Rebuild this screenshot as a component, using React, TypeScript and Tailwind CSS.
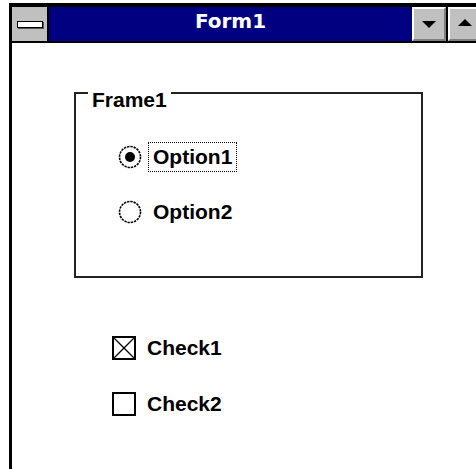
import React from 'react';

const uiFont = { fontFamily: '"Liberation Sans", Arial, sans-serif' };

function RadioDot({ checked }: { checked?: boolean }) {
  return (
    <svg width="24" height="24" viewBox="0 0 24 24" className="shrink-0">
      <circle cx="12" cy="12" r="10.5" fill="white" stroke="#000" strokeWidth="1.6" strokeDasharray="2.4 0.9" />
      {checked && <circle cx="12" cy="12" r="5" fill="#000" />}
    </svg>
  );
}

function CheckBox({ checked }: { checked?: boolean }) {
  return (
    <svg width="24" height="24" viewBox="0 0 24 24" className="shrink-0">
      <rect x="1" y="1" width="22" height="22" fill="white" stroke="#000" strokeWidth="2" />
      {checked && (
        <g stroke="#000" strokeWidth="1.2">
          <line x1="2" y1="2" x2="22" y2="22" />
          <line x1="22" y1="2" x2="2" y2="22" />
        </g>
      )}
    </svg>
  );
}

function ScrollButton({ dir }: { dir: 'up' | 'down' }) {
  return (
    <div className="flex h-full w-[34px] shrink-0 items-center justify-center border-t-2 border-l-2 border-b-2 border-r-2 border-t-white border-l-white border-b-[#808080] border-r-[#808080] bg-[#c0c0c0]">
      {dir === 'down' ? (
        <div className="h-0 w-0 border-x-[7px] border-t-[7px] border-x-transparent border-t-black" />
      ) : (
        <div className="mb-1 h-0 w-0 border-x-[7px] border-b-[7px] border-x-transparent border-b-black" />
      )}
    </div>
  );
}

export default function App() {
  return (
    <div className="h-[469px] w-[476px] overflow-hidden bg-white" style={uiFont}>
      <div className="ml-[9px] mt-[3px] h-[500px] w-[473px] border-l-[3px] border-t-[4px] border-black bg-white">
        {/* caption bar */}
        <div className="flex h-[36px] border-b-2 border-black">
          <div className="flex w-[37px] shrink-0 items-start justify-center border-r-2 border-black bg-[#c0c0c0] pt-[14px]">
            <div className="h-[7px] w-[26px] border-[1.5px] border-black bg-white shadow-[1px_1px_0_#555]" />
          </div>
          <div
            className="flex flex-1 items-start justify-center bg-[#000080] pt-[4px] text-[20px] font-bold leading-[20px] text-white"
            style={{ fontFamily: '"DejaVu Sans", sans-serif' }}
          >
            Form1
          </div>
          <ScrollButton dir="down" />
          <div className="w-[2px] shrink-0 bg-black" />
          <ScrollButton dir="up" />
        </div>

        {/* client area */}
        <div className="pl-[62px] pt-[49px] text-[21px] font-bold leading-[24px] text-black">
          <div className="relative h-[186px] w-[349px] border-2 border-[#222]">
            <span className="absolute -top-[6px] left-[12px] bg-white px-[4px]">Frame1</span>
            <div className="flex flex-col gap-[25px] pl-[42px] pt-[48px]">
              <label className="flex h-[30px] items-center gap-[6px]">
                <RadioDot checked />
                <span className="flex h-[30px] items-center border border-dotted border-black px-[4px]">Option1</span>
              </label>
              <label className="flex h-[30px] items-center gap-[6px]">
                <RadioDot />
                <span className="flex h-[30px] items-center border border-transparent px-[4px]">Option2</span>
              </label>
            </div>
          </div>

          <div className="ml-[38px] mt-[58px] flex flex-col gap-[32px]">
            <label className="flex h-[24px] items-center gap-[11px]">
              <CheckBox checked />
              <span>Check1</span>
            </label>
            <label className="flex h-[24px] items-center gap-[11px]">
              <CheckBox />
              <span>Check2</span>
            </label>
          </div>
        </div>
      </div>
    </div>
  );
}
